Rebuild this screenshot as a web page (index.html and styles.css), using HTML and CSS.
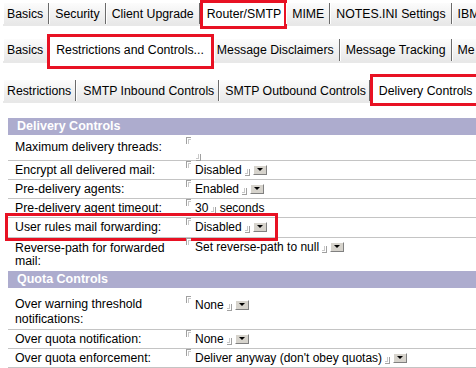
FILE: index.html
```html
<!DOCTYPE html>
<html lang="en">

<head>
    <meta charset="UTF-8">
    <title>Server Configuration - Router/SMTP</title>
    <link rel="stylesheet" href="styles.css">
</head>

<body>
    <div class="tabs tabs-main">
        <span class="tab first">Basics</span>
        <span class="tab">Security</span>
        <span class="tab">Client Upgrade</span>
        <span class="tab active marked">Router/SMTP</span>
        <span class="tab">MIME</span>
        <span class="tab">NOTES.INI Settings</span>
        <span class="tab">IBM</span>
    </div>

    <div class="tabs tabs-sub">
        <span class="tab first">Basics</span>
        <span class="tab active marked">Restrictions and Controls...</span>
        <span class="tab">Message Disclaimers</span>
        <span class="tab">Message Tracking</span>
        <span class="tab">Me</span>
    </div>

    <div class="tabs tabs-third">
        <span class="tab first">Restrictions</span>
        <span class="tab">SMTP Inbound Controls</span>
        <span class="tab">SMTP Outbound Controls</span>
        <span class="tab active marked">Delivery Controls</span>
    </div>

    <div class="form">
        <div class="section">Delivery Controls</div>
        <div class="row row-threads">
            <div class="label">Maximum delivery threads:</div>
            <div class="value stacked"><span class="fo"></span><span class="fc"></span></div>
        </div>
        <div class="row">
            <div class="label">Encrypt all delivered mail:</div>
            <div class="value"><span class="fo"></span>Disabled<span class="fc"></span><span class="drop"></span></div>
        </div>
        <div class="row">
            <div class="label">Pre-delivery agents:</div>
            <div class="value"><span class="fo"></span>Enabled<span class="fc"></span><span class="drop"></span></div>
        </div>
        <div class="row">
            <div class="label">Pre-delivery agent timeout:</div>
            <div class="value"><span class="fo"></span>30<span class="fc"></span> seconds</div>
        </div>
        <div class="row row-marked">
            <div class="label">User rules mail forwarding:</div>
            <div class="value"><span class="fo"></span>Disabled<span class="fc"></span><span class="drop"></span></div>
        </div>
        <div class="row row-wrap">
            <div class="label">Reverse-path for forwarded mail:</div>
            <div class="value"><span class="fo"></span>Set reverse-path to null<span class="fc"></span><span class="drop"></span></div>
        </div>

        <div class="section">Quota Controls</div>
        <div class="row row-warning">
            <div class="label">Over warning threshold notifications:</div>
            <div class="value"><span class="fo"></span>None<span class="fc"></span><span class="drop"></span></div>
        </div>
        <div class="row">
            <div class="label">Over quota notification:</div>
            <div class="value"><span class="fo"></span>None<span class="fc"></span><span class="drop"></span></div>
        </div>
        <div class="row">
            <div class="label">Over quota enforcement:</div>
            <div class="value"><span class="fo"></span>Deliver anyway (don't obey quotas)<span class="fc"></span><span class="drop"></span></div>
        </div>
    </div>
</body>

</html>
```

FILE: styles.css
```css
body {
    margin: 0;
    background-color: #fff;
    font-family: "Liberation Sans", Arial, sans-serif;
    font-size: 12.3px;
    color: #000;
    overflow: hidden;
    width: 476px;
    height: 368px;
}

/* tab strips */
.tabs {
    display: flex;
    align-items: flex-start;
    white-space: nowrap;
    margin-left: 3px;
    border-bottom: 2px solid #e8e8e8;
    height: 21px;
}

.tabs-main {
    margin-top: 3px;
}

.tabs-sub {
    margin-top: 13px;
    height: 22px;
}

.tabs-third {
    margin-top: 17px;
}

.tab {
    display: block;
    height: 21px;
    line-height: 22px;
    padding: 0 5px;
    background: linear-gradient(#fcfcfc, #e8e8e8);
    border-left: 1px solid #fff;
    border-right: 1px solid #6a6a6a;
    flex-shrink: 0;
}

.tab.first {
    padding-left: 3px;
}

.tab.active {
    background: #fff;
    border-color: #fff;
    height: 23px;
}

.marked {
    outline: 3px solid #e81123;
}

.tabs-main .tab.active {
    margin: 0 2px 0 3px;
    padding: 0 2px 0 3px;
}

.tabs-sub .tab {
    height: 22px;
    line-height: 23px;
}

.tabs-sub .tab.first {
    padding-right: 4px;
    border-right: none;
}

.tabs-sub .tab.active {
    margin: -2px 0 0 3px;
    padding: 0 6px 0 5px;
    height: 29px;
    line-height: 27px;
}

.tabs-sub .tab:nth-child(3) {
    padding-left: 2px;
    margin-left: 3px;
}

.tabs-third .tab.first {
    padding-right: 4px;
}

.tabs-third .tab:nth-child(2) {
    padding: 0 4px 0 6px;
}

.tabs-third .tab:nth-child(3) {
    padding: 0 3px 0 5px;
}

.tabs-third .tab.active {
    margin: -3px 0 0 3px;
    padding: 0 3px 0 5px;
    height: 26px;
    line-height: 28px;
}

/* form table */
.form {
    margin: 15px 0 0 8px;
}

.section {
    background-color: #adacce;
    color: #fff;
    font-weight: bold;
    height: 17px;
    line-height: 17px;
    padding-left: 9px;
    font-size: 12.5px;
}

.row {
    display: grid;
    grid-template-columns: 178px 1fr;
    border-bottom: 1px solid #c4c4c4;
    height: 18px;
    line-height: 19px;
    position: relative;
}

.row-threads {
    line-height: 20px;
    padding-top: 2px;
    box-sizing: border-box;
    height: 26px;
}

.row-marked {
    height: 19px;
}

.row-wrap {
    height: 33px;
    border-bottom: none;
}

.row-wrap .label {
    line-height: 13px;
    padding-top: 4px;
}

.row-warning {
    height: 41px;
}

.row-warning .label {
    line-height: 15px;
    padding-top: 9px;
}

.row-warning .value {
    padding-top: 8px;
}

.label {
    padding: 0 12px 0 7px;
}

.value {
    white-space: nowrap;
    font-size: 12px;
}

.value.stacked {
    line-height: 10px;
}

.value.stacked .fc {
    display: block;
    margin: 3px 0 0 10px;
}

/* notes field delimiters */
.fo,
.fc {
    display: inline-block;
    width: 4px;
    height: 6px;
    border: 1px solid #a0a0a0;
}

.fo {
    border-right: none;
    border-bottom: none;
    box-shadow: inset 1px 1px 0 #fff, inset 2px 2px 0 #c8c8c8;
    vertical-align: 6px;
    margin-right: 4px;
}

.fc {
    border-left: none;
    border-top: none;
    box-shadow: inset -1px -1px 0 #fff, inset -2px -2px 0 #c8c8c8;
    vertical-align: -2px;
    margin-left: 3px;
}

.drop {
    display: inline-block;
    width: 12px;
    height: 8px;
    margin-left: 3px;
    vertical-align: -1px;
    background-color: #d6d3cc;
    border-top: 1px solid #fff;
    border-left: 1px solid #fff;
    border-right: 1px solid #808080;
    border-bottom: 1px solid #808080;
    position: relative;
}

.drop::after {
    content: "";
    position: absolute;
    left: 3px;
    top: 2px;
    border-left: 3px solid transparent;
    border-right: 3px solid transparent;
    border-top: 3px solid #000;
}

.row-marked::after {
    content: "";
    position: absolute;
    left: -3px;
    top: -5px;
    width: 267px;
    height: 22px;
    border: 3px solid #e81123;
}
```
